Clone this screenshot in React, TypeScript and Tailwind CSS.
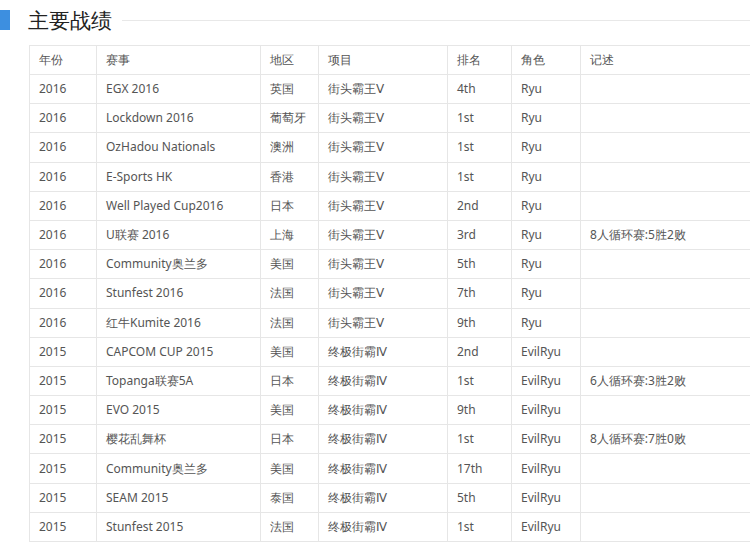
const rows: string[][] = [
  ["2016", "EGX 2016", "英国", "街头霸王Ⅴ", "4th", "Ryu", ""],
  ["2016", "Lockdown 2016", "葡萄牙", "街头霸王Ⅴ", "1st", "Ryu", ""],
  ["2016", "OzHadou Nationals", "澳洲", "街头霸王Ⅴ", "1st", "Ryu", ""],
  ["2016", "E-Sports HK", "香港", "街头霸王Ⅴ", "1st", "Ryu", ""],
  ["2016", "Well Played Cup2016", "日本", "街头霸王Ⅴ", "2nd", "Ryu", ""],
  ["2016", "U联赛 2016", "上海", "街头霸王Ⅴ", "3rd", "Ryu", "8人循环赛:5胜2败"],
  ["2016", "Community奥兰多", "美国", "街头霸王Ⅴ", "5th", "Ryu", ""],
  ["2016", "Stunfest 2016", "法国", "街头霸王Ⅴ", "7th", "Ryu", ""],
  ["2016", "红牛Kumite 2016", "法国", "街头霸王Ⅴ", "9th", "Ryu", ""],
  ["2015", "CAPCOM CUP 2015", "美国", "终极街霸Ⅳ", "2nd", "EvilRyu", ""],
  ["2015", "Topanga联赛5A", "日本", "终极街霸Ⅳ", "1st", "EvilRyu", "6人循环赛:3胜2败"],
  ["2015", "EVO 2015", "美国", "终极街霸Ⅳ", "9th", "EvilRyu", ""],
  ["2015", "樱花乱舞杯", "日本", "终极街霸Ⅳ", "1st", "EvilRyu", "8人循环赛:7胜0败"],
  ["2015", "Community奥兰多", "美国", "终极街霸Ⅳ", "17th", "EvilRyu", ""],
  ["2015", "SEAM 2015", "泰国", "终极街霸Ⅳ", "5th", "EvilRyu", ""],
  ["2015", "Stunfest 2015", "法国", "终极街霸Ⅳ", "1st", "EvilRyu", ""],
];
const head = ["年份", "赛事", "地区", "项目", "排名", "角色", "记述"];
const widths = ["w-[67px]", "w-[164px]", "w-[58px]", "w-[129px]", "w-[64px]", "w-[69px]", ""];

export default function App() {
  return (
    <div className="w-[750px] h-[544px] overflow-hidden bg-white text-[#555] font-['Liberation_Sans','Noto_Sans_CJK_SC',sans-serif]">
      <div className="flex items-center h-[38px] pt-[2px]">
        <div className="w-[10px] h-[20px] bg-[#3d8fe0]" />
        <h2 className="ml-[18px] text-[21px] text-[#222] leading-none">主要战绩</h2>
        <div className="ml-[10px] flex-1 h-px bg-[#e8e8e8]" />
      </div>
      <table className="ml-[29px] mt-[7px] w-[722px] border-collapse text-[12px] table-fixed">
        <thead>
          <tr className="h-[29px]">
            {head.map((h, i) => (
              <th key={i} className={`${widths[i]} border border-[#e6e6e6] px-[9px] text-left font-normal`}>{h}</th>
            ))}
          </tr>
        </thead>
        <tbody>
          {rows.map((r, ri) => (
            <tr key={ri} className="h-[29.2px]">
              {r.map((c, ci) => (
                <td key={ci} className="border border-[#e6e6e6] px-[9px] whitespace-nowrap">{c}</td>
              ))}
            </tr>
          ))}
        </tbody>
      </table>
    </div>
  );
}
